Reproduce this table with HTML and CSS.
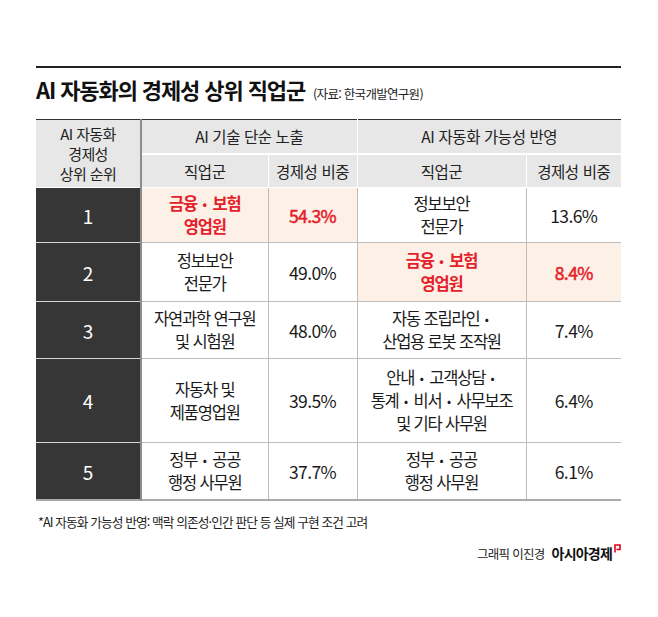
FILE: index.html
```html
<!DOCTYPE html>
<html lang="ko">
<head>
<meta charset="utf-8">
<link rel="stylesheet" href="styles.css">
</head>
<body>
<div class="page">
  <header class="head">
    <h1 class="title">AI 자동화의 경제성 상위 직업군</h1>
    <span class="source">(자료: 한국개발연구원)</span>
  </header>
  <table class="grid">
    <colgroup>
      <col class="c1"><col class="c2"><col class="c3"><col class="c4"><col class="c5">
    </colgroup>
    <thead>
      <tr class="h1r">
        <th rowspan="2" class="rankhead">AI 자동화<br>경제성<br>상위 순위</th>
        <th colspan="2" class="grp">AI 기술 단순 노출</th>
        <th colspan="2" class="grp">AI 자동화 가능성 반영</th>
      </tr>
      <tr class="h2r">
        <th>직업군</th><th>경제성 비중</th><th>직업군</th><th>경제성 비중</th>
      </tr>
    </thead>
    <tbody>
      <tr class="r1">
        <td class="rank">1</td>
        <td class="hl">금융 <span class="dot">•</span> 보험<br>영업원</td><td class="hl pct">54.3%</td>
        <td>정보보안<br>전문가</td><td class="pct">13.6%</td>
      </tr>
      <tr class="r2">
        <td class="rank">2</td>
        <td>정보보안<br>전문가</td><td class="pct">49.0%</td>
        <td class="hl">금융 <span class="dot">•</span> 보험<br>영업원</td><td class="hl pct">8.4%</td>
      </tr>
      <tr class="r3">
        <td class="rank">3</td>
        <td>자연과학 연구원<br>및 시험원</td><td class="pct">48.0%</td>
        <td>자동 조립라인 <span class="dot">•</span><br>산업용 로봇 조작원</td><td class="pct">7.4%</td>
      </tr>
      <tr class="r4">
        <td class="rank">4</td>
        <td>자동차 및<br>제품영업원</td><td class="pct">39.5%</td>
        <td>안내 <span class="dot">•</span> 고객상담 <span class="dot">•</span><br>통계 <span class="dot">•</span> 비서 <span class="dot">•</span> 사무보조<br>및 기타 사무원</td><td class="pct">6.4%</td>
      </tr>
      <tr class="r5">
        <td class="rank">5</td>
        <td>정부 <span class="dot">•</span> 공공<br>행정 사무원</td><td class="pct">37.7%</td>
        <td>정부 <span class="dot">•</span> 공공<br>행정 사무원</td><td class="pct">6.1%</td>
      </tr>
    </tbody>
  </table>
  <p class="note">*AI 자동화 가능성 반영: 맥락 의존성·인간 판단 등 실제 구현 조건 고려</p>
  <div class="credit">
    <span class="author">그래픽 이진경</span>
    <span class="brand">아시아경제<svg class="mark" width="7" height="9" viewBox="0 0 7 9"><path d="M1 8.5V1H6V5.5H2.5" fill="none" stroke="#e60012" stroke-width="1.6"/></svg></span>
  </div>
</div>
</body>
</html>
```

FILE: styles.css
```css
html, body {
  margin: 0;
  padding: 0;
  background: #ffffff;
}
body {
  font-family: "Noto Sans CJK KR", "Noto Sans", sans-serif;
  color: #1a1a1a;
}
.page {
  width: 585px;
  padding: 66px 0 0 36px;
}
.head {
  border-top: 2px solid #222;
  display: flex;
  align-items: baseline;
  gap: 8px;
  padding-top: 8px;
  height: 43px;
  box-sizing: border-box;
}
.title {
  margin: 0;
  font-size: 22px;
  font-weight: 700;
  letter-spacing: -1.1px;
  line-height: 26px;
  color: #111;
}
.source {
  font-size: 12.5px;
  letter-spacing: -0.7px;
  color: #222;
}
.grid {
  margin-top: 10px;
  width: 585px;
  table-layout: fixed;
  border-collapse: collapse;
  border-top: 1.5px solid #333;
  border-bottom: 2px solid #aaa;
}
.c1 { width: 105px; }
.c2 { width: 127px; }
.c3 { width: 89px; }
.c4 { width: 169px; }
.c5 { width: 95px; }
th, td {
  padding: 0;
  text-align: center;
  vertical-align: middle;
  font-size: 16.5px;
  line-height: 23px;
  letter-spacing: -1.2px;
  border: 1.5px solid #bdbdbd;
  white-space: nowrap;
}
th {
  background: #e7e7e7;
  font-weight: 400;
  color: #222;
  font-size: 15.5px;
  line-height: 19px;
  letter-spacing: -0.4px;
  border-color: #fff;
}
.rankhead {
  font-size: 15px;
  letter-spacing: -0.6px;
  line-height: 20px;
}
thead tr:first-child th { border-top: none; }
th:first-child, td:first-child { border-left: none; }
th:last-child, td:last-child { border-right: none; }
.h1r th { height: 33px; }
.h2r th { height: 32px; }
.rankhead { border-right: 2px solid #8c8c8c !important; }
.grp { border-bottom: 2px solid #fff; }
.h2r th { border-top: 2px solid #fff; }
.h2r th + th { border-left: 1.5px solid #a9a9a9; }
.h1r .grp + .grp { border-left: 1.5px solid #a9a9a9; }
.rank {
  background: #363636;
  color: #fff;
  font-size: 19px;
  letter-spacing: 0;
  border-color: #d6d6d6;
  border-right: 2px solid #8c8c8c;
}
tbody tr:last-child td { border-bottom: none; }
.r1 td { height: 54px; }
.r2 td { height: 58px; }
.r3 td { height: 56px; }
.r4 td { height: 83px; }
.r5 td { height: 56px; }
.pct {
  font-size: 17.5px;
  letter-spacing: -0.6px;
}
.dot {
  font-size: 12px;
  letter-spacing: 0;
  vertical-align: 1px;
  margin: 0 2px;
}
.hl {
  background: #fdf0e6;
  color: #e5202a;
  font-weight: 700;
}
.hl.pct { font-weight: 400; -webkit-text-stroke: 0.5px #e5202a; }
.note {
  margin: 11px 0 0 2px;
  font-size: 12.7px;
  letter-spacing: -0.9px;
  color: #222;
}
.credit {
  margin-top: 12px;
  display: flex;
  justify-content: flex-end;
  align-items: baseline;
  gap: 7px;
}
.author {
  font-size: 12.5px;
  letter-spacing: -0.7px;
  color: #222;
}
.brand {
  font-size: 14px;
  font-weight: 700;
  letter-spacing: -0.8px;
  color: #111;
  position: relative;
  padding-right: 9px;
}
.mark {
  position: absolute;
  right: 0;
  top: 1px;
}
```
